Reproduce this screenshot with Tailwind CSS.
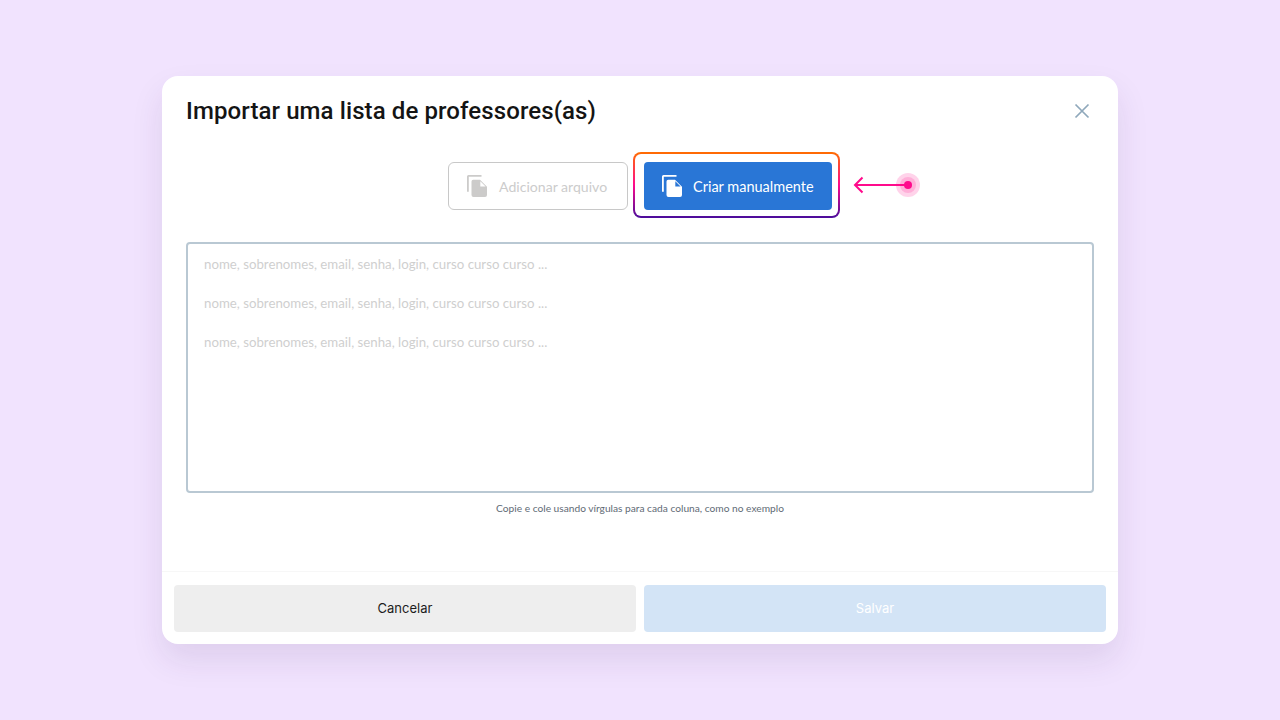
<!DOCTYPE html>
<html lang="en">
  <head>
    <meta charset="UTF-8" />
    <meta name="viewport" content="width=device-width, initial-scale=1.0" />
    <title>Importar professores</title>
    <script src="https://cdn.jsdelivr.net/npm/@tailwindcss/browser@4"></script>
  </head>
  <body class="bg-[#f1e3fe] h-[720px] overflow-hidden flex items-start justify-center pt-[76px] font-['Lato',sans-serif]">
    <div class="w-[956px] h-[568px] bg-white rounded-[16px] shadow-[0_16px_32px_rgba(60,30,90,0.10)] flex flex-col">
      <!-- Header -->
      <div class="flex items-center justify-between pl-[24px] pr-[26px] pt-[6px] h-[70px] shrink-0 pb-[6px]">
        <h1 class="text-[24px] leading-[32px] font-medium tracking-[0.1px] text-[#141414] font-['Roboto',sans-serif]">Importar uma lista de professores(as)</h1>
        <button aria-label="Fechar" class="w-[20px] h-[20px] flex items-center justify-center">
          <svg class="w-[20px] h-[20px]" viewBox="0 0 20 20" fill="none" stroke="#8fa8bb" stroke-width="1.700">
            <path d="M3.500 3.500 16.500 16.500M16.500 3.500 3.500 16.500" />
          </svg>
        </button>
      </div>

      <!-- Tabs -->
      <div class="flex justify-center gap-[16px] pt-[16px] shrink-0">
        <button class="w-[180px] h-[48px] border border-[#c8c8c8] rounded-[6px] flex items-center pl-[18px] gap-[12px] text-[14.100px] text-[#cccccc]">
          <svg class="w-[20px] h-[22px] shrink-0" viewBox="0 0 20 22" fill="#cccbca">
            <path d="M0 1.500A1.500 1.500 0 0 1 1.500 0H14.500v1.800H1.800V16.700H0Z" />
            <path d="M6.500 4.700H13l7 7V20a2 2 0 0 1-2 2H6.500a2 2 0 0 1-2-2V6.500a1.800 1.800 0 0 1 2-1.800Z" />
            <path d="M13.300 6.200v5.300h5.300Z" fill="#fff" />
          </svg>
          <span class="pt-[2px]">Adicionar arquivo</span>
        </button>
        <div class="relative">
          <div class="absolute -top-[10px] -bottom-[8px] -left-[11px] -right-[8px] rounded-[8px] p-[2px] bg-[linear-gradient(180deg,#ff6d00_0%,#ff0a8c_50%,#4a0d9b_100%)]">
            <div class="w-full h-full bg-white rounded-[6px]"></div>
          </div>
          <button class="relative w-[188px] h-[48px] bg-[#2976d6] rounded-[4px] flex items-center pl-[18px] gap-[11px] text-[14.500px] text-white">
            <svg class="w-[20px] h-[22px] shrink-0" viewBox="0 0 20 22" fill="#fff">
              <path d="M0 1.500A1.500 1.500 0 0 1 1.500 0H14.500v1.800H1.800V16.700H0Z" />
              <path d="M6.500 4.700H13l7 7V20a2 2 0 0 1-2 2H6.500a2 2 0 0 1-2-2V6.500a1.800 1.800 0 0 1 2-1.800Z" />
              <path d="M13.300 6.200v5.300h5.300Z" fill="#2976d6" />
            </svg>
            <span class="pt-[2px]">Criar manualmente</span>
          </button>
          <!-- Annotation arrow -->
          <div class="absolute left-[209px] top-[1px] w-[68px] h-[44px]">
            <svg class="w-[68px] h-[44px]" viewBox="0 0 68 44" fill="none">
              <circle cx="55" cy="22" r="12" fill="#ff0a8c" fill-opacity="0.18" />
              <circle cx="55" cy="22" r="8" fill="#ff0a8c" fill-opacity="0.18" />
              <circle cx="55" cy="22" r="4" fill="#ff0a8c" />
              <path d="M55 22H2M9.500 14.500 2 22l7.500 7.500" stroke="#ff0a8c" stroke-width="2" />
            </svg>
          </div>
        </div>
      </div>

      <!-- Text area -->
      <div class="px-[24px] pt-[32px] shrink-0">
        <div class="h-[251px] border-2 border-[#b9c8d3] rounded-[4px] pl-[16px] pt-[11px] flex flex-col gap-[20px] text-[13.250px] leading-[19px] text-[#cfcfcf]">
          <p>nome, sobrenomes, email, senha, login, curso curso curso ...</p>
          <p>nome, sobrenomes, email, senha, login, curso curso curso ...</p>
          <p>nome, sobrenomes, email, senha, login, curso curso curso ...</p>
        </div>
        <p class="text-center text-[10.200px] leading-[14px] text-[#5f6b76] mt-[8px]">Copie e cole usando vírgulas para cada coluna, como no exemplo</p>
      </div>

      <!-- Footer -->
      <div class="mt-auto border-t border-[#f7f7f7] px-[12px] pt-[13px] pb-[12px] flex gap-[8px] font-['Inter',sans-serif] text-[13px]">
        <button class="flex-1 h-[47px] bg-[#eeeeee] rounded-[4px] text-[#1c1c1c]">Cancelar</button>
        <button class="flex-1 h-[47px] bg-[#d3e4f6] rounded-[4px] text-white">Salvar</button>
      </div>
    </div>
  </body>
</html>
